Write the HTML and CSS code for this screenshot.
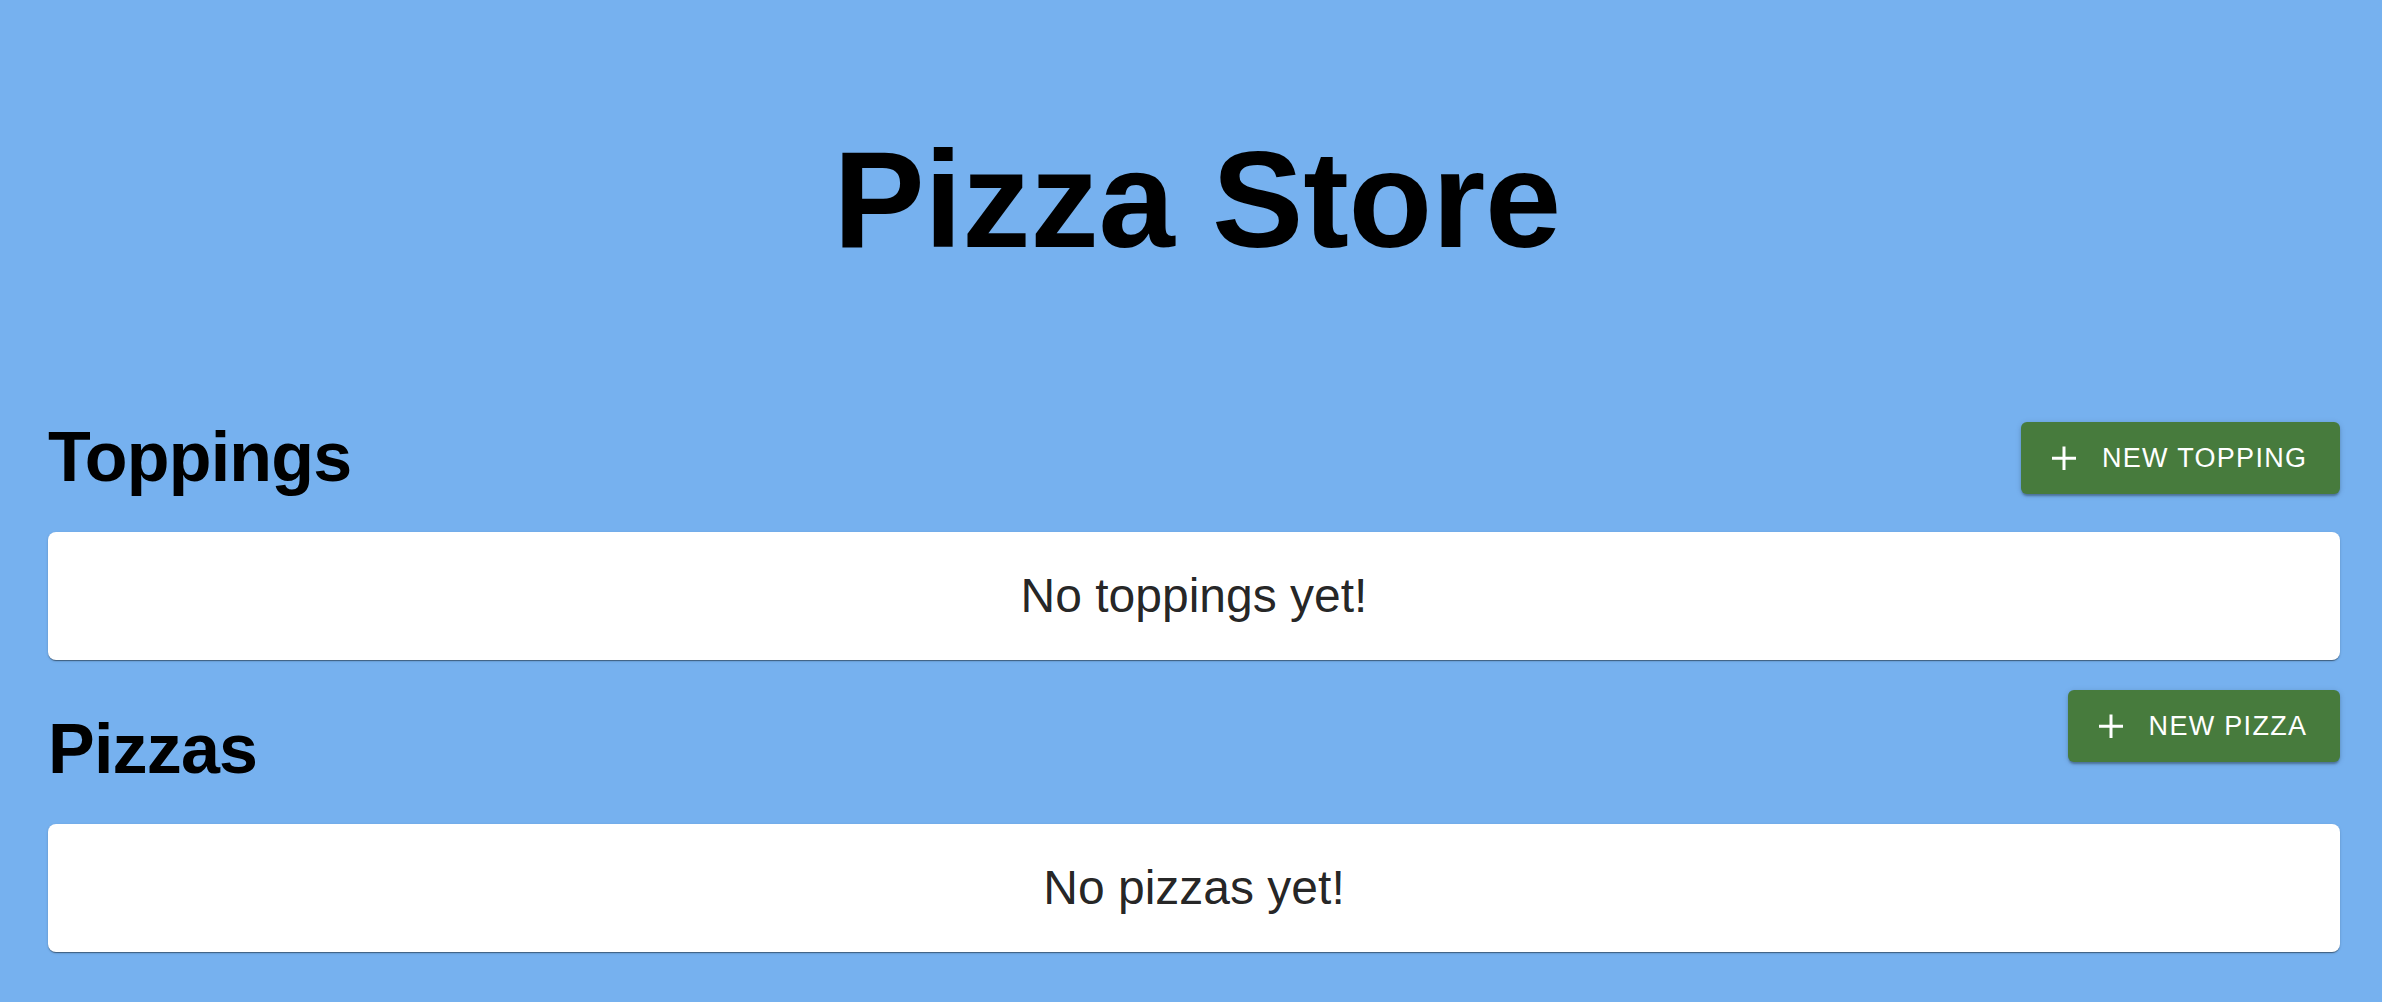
FILE: index.html
```html
<!DOCTYPE html>
<html lang="en">
<head>
<meta charset="utf-8">
<title>Pizza Store</title>
<link rel="stylesheet" href="styles.css">
</head>
<body>
<div class="page">
  <header class="masthead">
    <h1 class="title">Pizza Store</h1>
  </header>
  <main class="content">
    <section class="section section-first">
      <div class="section-head">
        <h2 class="section-title">Toppings</h2>
        <button class="add-btn" type="button">
          <svg class="add-icon" viewBox="0 0 24 24" width="24" height="24" aria-hidden="true"><path d="M12 0.5v23.5M0 12.25h24" stroke="#fff" stroke-width="3" fill="none"/></svg>
          <span class="add-label">New Topping</span>
        </button>
      </div>
      <div class="card"><p class="empty">No toppings yet!</p></div>
    </section>
    <section class="section section-second">
      <div class="section-head">
        <h2 class="section-title section-title-offset">Pizzas</h2>
        <button class="add-btn" type="button">
          <svg class="add-icon" viewBox="0 0 24 24" width="24" height="24" aria-hidden="true"><path d="M12 0.5v23.5M0 12.25h24" stroke="#fff" stroke-width="3" fill="none"/></svg>
          <span class="add-label">New Pizza</span>
        </button>
      </div>
      <div class="card"><p class="empty">No pizzas yet!</p></div>
    </section>
  </main>
</div>
</body>
</html>
```

FILE: styles.css
```css
html, body {
  margin: 0;
  padding: 0;
}

body {
  background: #76b1ef;
  font-family: "Liberation Sans", Arial, Helvetica, sans-serif;
  color: #000;
  min-height: 1002px;
}

.page {
  padding: 0 42px 0 48px;
}

.masthead {
  padding-top: 131px;
  display: flex;
  justify-content: center;
}

.title {
  margin: 0;
  font-size: 137px;
  line-height: 137px;
  font-weight: 700;
  text-align: center;
  letter-spacing: -0.3px;
  padding-left: 6px;
}

.content {
  padding-top: 154px;
}

.section-second {
  margin-top: 30px;
}

.section-head {
  display: flex;
  justify-content: space-between;
  align-items: flex-start;
}

.section-title {
  margin: 0 0 40px 0;
  font-size: 70px;
  line-height: 70px;
  font-weight: 700;
  letter-spacing: -0.8px;
}

.section-title-offset {
  padding-top: 24px;
}

.add-btn {
  display: flex;
  align-items: center;
  gap: 26px;
  height: 72px;
  padding: 0 34px 0 31px;
  border: none;
  border-radius: 6px;
  background: #477b3d;
  color: #fff;
  font-family: "Liberation Sans", Arial, Helvetica, sans-serif;
  font-size: 27px;
  letter-spacing: 1.3px;
  text-transform: uppercase;
  box-shadow: 0 3px 2px -1px rgba(0, 0, 0, 0.2), 0 2px 3px 0 rgba(0, 0, 0, 0.14), 0 1px 6px 0 rgba(0, 0, 0, 0.12);
  cursor: pointer;
}

.add-icon {
  display: block;
  flex: none;
}

.add-label {
  display: block;
  line-height: 1;
  margin-right: -1.3px;
}

.card {
  background: #fff;
  border-radius: 8px;
  box-shadow: 0 2px 1px -1px rgba(0, 0, 0, 0.28), 0 1px 1px 0 rgba(0, 0, 0, 0.18), 0 1px 3px 0 rgba(0, 0, 0, 0.14);
  padding: 40px 0;
}

.empty {
  margin: 0;
  font-size: 48px;
  line-height: 48px;
  text-align: center;
  color: rgba(0, 0, 0, 0.87);
}
```
